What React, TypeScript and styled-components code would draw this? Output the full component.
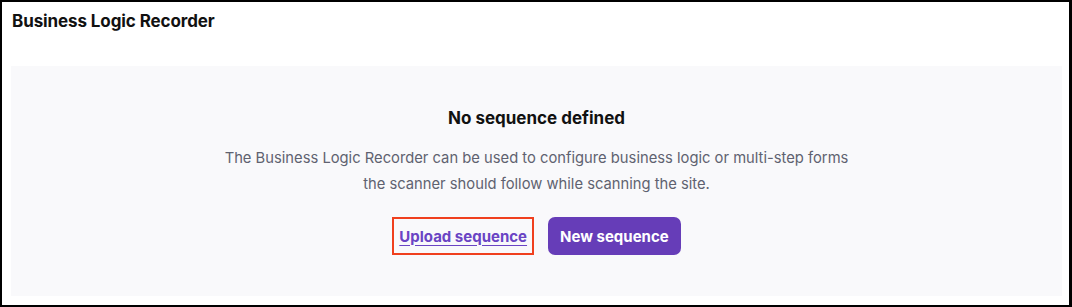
import React from 'react'
import styled, { createGlobalStyle } from 'styled-components'

const GlobalStyle = createGlobalStyle`
  html, body {
    margin: 0;
    padding: 0;
    background: #ffffff;
  }
  body {
    font-family: Inter, "Noto Sans", "Liberation Sans", sans-serif;
  }
`

const Frame = styled.div`
  box-sizing: border-box;
  width: 1072px;
  height: 307px;
  border: 2px solid #000000;
  border-right-width: 3px;
  background: #ffffff;
  display: flex;
  flex-direction: column;
`

const Title = styled.h1`
  margin: 0;
  padding: 9px 10px 0;
  height: 64px;
  box-sizing: border-box;
  font-size: 17px;
  line-height: 20px;
  font-weight: 700;
  color: #111111;
  letter-spacing: -0.1px;
`

const Panel = styled.section`
  margin: 0 7px 0 9px;
  height: 230px;
  box-sizing: border-box;
  background: #f9f9fb;
  display: flex;
  flex-direction: column;
  align-items: center;
  padding-top: 40px;
`

const Heading = styled.h2`
  margin: 0;
  font-size: 17px;
  line-height: 24px;
  font-weight: 700;
  color: #111111;
`

const Description = styled.p`
  margin: 15px 0 0;
  font-size: 14.75px;
  line-height: 26px;
  color: #5f6270;
  text-align: center;
  max-width: 640px;
`

const Actions = styled.div`
  margin-top: 20px;
  display: flex;
  align-items: center;
  gap: 14px;
`

const LinkButton = styled.button`
  box-sizing: border-box;
  height: 38px;
  padding: 0 5px;
  border: 2px solid #f0401e;
  background: transparent;
  font-family: inherit;
  font-size: 15px;
  font-weight: 700;
  color: #6a44c4;
  text-decoration: underline;
  text-underline-offset: 3px;
  cursor: pointer;
`

const PrimaryButton = styled.button`
  box-sizing: border-box;
  height: 38px;
  padding: 0 12px;
  border: none;
  border-radius: 7px;
  background: #663db8;
  font-family: inherit;
  font-size: 15px;
  font-weight: 700;
  color: #ffffff;
  cursor: pointer;
`

const App = () => {
  return (
    <>
      <GlobalStyle />
      <Frame>
        <Title>Business Logic Recorder</Title>
        <Panel>
          <Heading>No sequence defined</Heading>
          <Description>
            The Business Logic Recorder can be used to configure business logic or multi-step forms
            <br />
            the scanner should follow while scanning the site.
          </Description>
          <Actions>
            <LinkButton>Upload sequence</LinkButton>
            <PrimaryButton>New sequence</PrimaryButton>
          </Actions>
        </Panel>
      </Frame>
    </>
  )
}

export default App
